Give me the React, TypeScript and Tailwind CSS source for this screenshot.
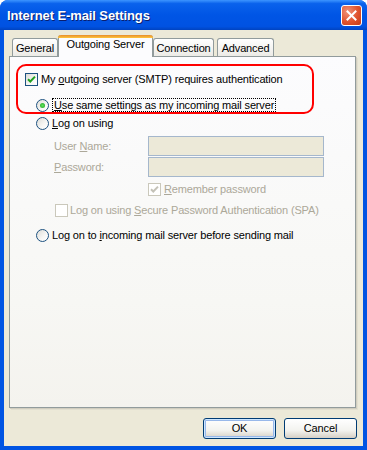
import React from 'react';

const FONT = "font-['Tahoma','Liberation_Sans',sans-serif]";

function Check({ checked, disabled }: { checked?: boolean; disabled?: boolean }) {
  return (
    <span
      className={`w-[13px] h-[13px] shrink-0 flex items-center justify-center border ${
        disabled
          ? 'border-[#cac8bb] bg-white'
          : 'border-[#1c5180] bg-[linear-gradient(135deg,#dcdcd7_0%,#f7f7f5_60%,#ffffff_100%)]'
      }`}
    >
      {checked && (
        <svg width="9" height="9" viewBox="0 0 9 9">
          <path d="M1 4.2 L3.3 6.5 L8 1.6" fill="none" stroke={disabled ? '#c4c2b8' : '#21a121'} strokeWidth="2" />
        </svg>
      )}
    </span>
  );
}

function Radio({ checked }: { checked?: boolean }) {
  return (
    <span className="w-[13px] h-[13px] shrink-0 rounded-full border border-[#1c5180] bg-[linear-gradient(135deg,#dcdcd7_0%,#f7f7f5_60%,#ffffff_100%)] flex items-center justify-center">
      {checked && <span className="w-[5px] h-[5px] rounded-full bg-[radial-gradient(circle,#5ee25e_0%,#21a121_100%)]" />}
    </span>
  );
}

function Tab({ label, w, selected, className = '' }: { label: string; w: string; selected?: boolean; className?: string }) {
  if (selected) {
    return (
      <div className={`relative z-10 -mb-px h-[22px] ${w} rounded-t-[3px] border-x border-[#919b9c] bg-[#fcfcfe] flex flex-col ${className}`}>
        <div className="h-[3px] rounded-t-[3px] bg-[linear-gradient(180deg,#e68b2c,#ffc73c)] -mx-px" />
        <div className="flex-1 flex items-start justify-center pt-[1px]">{label}</div>
      </div>
    );
  }
  return (
    <div
      className={`h-[18px] ${w} rounded-t-[3px] border border-b-0 border-[#919b9c] bg-[linear-gradient(180deg,#ffffff,#ecebe6)] flex items-center justify-center pt-[1px] ${className}`}
    >
      {label}
    </div>
  );
}

function Btn({ label, def }: { label: string; def?: boolean }) {
  return (
    <div
      className={`w-[73px] h-[21px] rounded-[3px] border border-[#003c74] bg-[linear-gradient(180deg,#ffffff_0%,#f3f3ef_60%,#d6d0c5_100%)] flex items-center justify-center ${
        def ? 'shadow-[inset_0_0_0_1px_#cee7ff,inset_0_0_0_2px_#98b8ea]' : ''
      }`}
    >
      {label}
    </div>
  );
}

export default function App() {
  return (
    <div className={`w-[367px] h-[450px] bg-white text-[11px] tracking-[-0.15px] text-black leading-none ${FONT}`}>
      <div className="w-full h-full rounded-t-[8px] overflow-hidden flex flex-col bg-[#0054e3]">
        {/* Title bar */}
        <div className="h-[30px] shrink-0 flex items-center justify-between pl-[7px] pr-[5px] bg-[linear-gradient(180deg,#3d95ff_0%,#0a62ec_12%,#0055e5_50%,#0052e2_88%,#0043c0_100%)]">
          <span className="text-white font-bold text-[13px] font-['Liberation_Sans',sans-serif] [text-shadow:1px_1px_0_#0a1e6e] tracking-[-0.1px]">
            Internet E-mail Settings
          </span>
          <div className="w-[21px] h-[21px] rounded-[3px] border border-white bg-[radial-gradient(circle_at_30%_30%,#f0937a_0%,#e0532d_55%,#c23a18_100%)] flex items-center justify-center">
            <svg width="11" height="11" viewBox="0 0 11 11">
              <path d="M1.5 1.5 L9.5 9.5 M9.5 1.5 L1.5 9.5" stroke="white" strokeWidth="2" strokeLinecap="square" />
            </svg>
          </div>
        </div>

        {/* Client area */}
        <div className="flex-1 ml-[4px] mr-[4px] mb-[4px] bg-[#ece9d8] flex flex-col">
          {/* Tabs */}
          <div className="h-[26px] shrink-0 flex items-end pl-[8px]">
            <Tab label="General" w="w-[46px]" />
            <Tab label="Outgoing Server" w="w-[95px]" selected />
            <Tab label="Connection" w="w-[61px]" />
            <Tab label="Advanced" w="w-[57px]" className="ml-[3px]" />
          </div>

          {/* Panel */}
          <div className="ml-[5px] w-[347px] h-[352px] border border-[#919b9c] bg-[linear-gradient(180deg,#fcfcfe_0%,#f7f7f4_70%,#f4f3ee_100%)] shadow-[1px_1px_0_#d0cdbf,2px_2px_0_#e2dfcf] flex flex-col">
            <div className="ml-[6px] mt-[7px] w-[298px] h-[50px] rounded-[10px] border-2 border-[#ff0000] flex flex-col">
              <div className="mt-[7px] h-[13px] pl-[7px] flex items-center gap-[3px]">
                <Check checked />
                <span>
                  My <u>o</u>utgoing server (SMTP) requires authentication
                </span>
              </div>
              <div className="mt-[12px] h-[14px] pl-[18px] flex items-center gap-[3px]">
                <Radio checked />
                <span className="h-[14px] flex items-center px-[1px] border border-dotted border-black">
                  <span>
                    <u>U</u>se same settings as my incoming mail server
                  </span>
                </span>
              </div>
            </div>

            <div className="mt-[3px] h-[13px] pl-[26px] flex items-center gap-[3px]">
              <Radio />
              <span>
                <u>L</u>og on using
              </span>
            </div>

            <div className="mt-[6px] h-[20px] pl-[44px] flex items-center text-[#aca899]">
              <span className="w-[94px]">
                User <u>N</u>ame:
              </span>
              <div className="w-[176px] h-[20px] border border-[#a5b7cc] bg-[#ece9d8]" />
            </div>
            <div className="mt-[1px] h-[20px] pl-[44px] flex items-center text-[#aca899]">
              <span className="w-[94px]">
                <u>P</u>assword:
              </span>
              <div className="w-[176px] h-[20px] border border-[#a5b7cc] bg-[#ece9d8]" />
            </div>

            <div className="mt-[6px] h-[13px] pl-[138px] flex items-center gap-[3px] text-[#aca899]">
              <Check checked disabled />
              <span>
                <u>R</u>emember password
              </span>
            </div>
            <div className="mt-[8px] h-[13px] pl-[45px] flex items-center gap-[2px] text-[#aca899]">
              <Check disabled />
              <span>
                Log on using <u>S</u>ecure Password Authentication (SPA)
              </span>
            </div>

            <div className="mt-[12px] h-[13px] pl-[26px] flex items-center gap-[3px]">
              <Radio />
              <span>
                Log on to <u>i</u>ncoming mail server before sending mail
              </span>
            </div>
          </div>

          {/* Buttons */}
          <div className="mt-[10px] pr-[6px] flex justify-end gap-[8px]">
            <Btn label="OK" def />
            <Btn label="Cancel" />
          </div>
        </div>
      </div>
    </div>
  );
}
